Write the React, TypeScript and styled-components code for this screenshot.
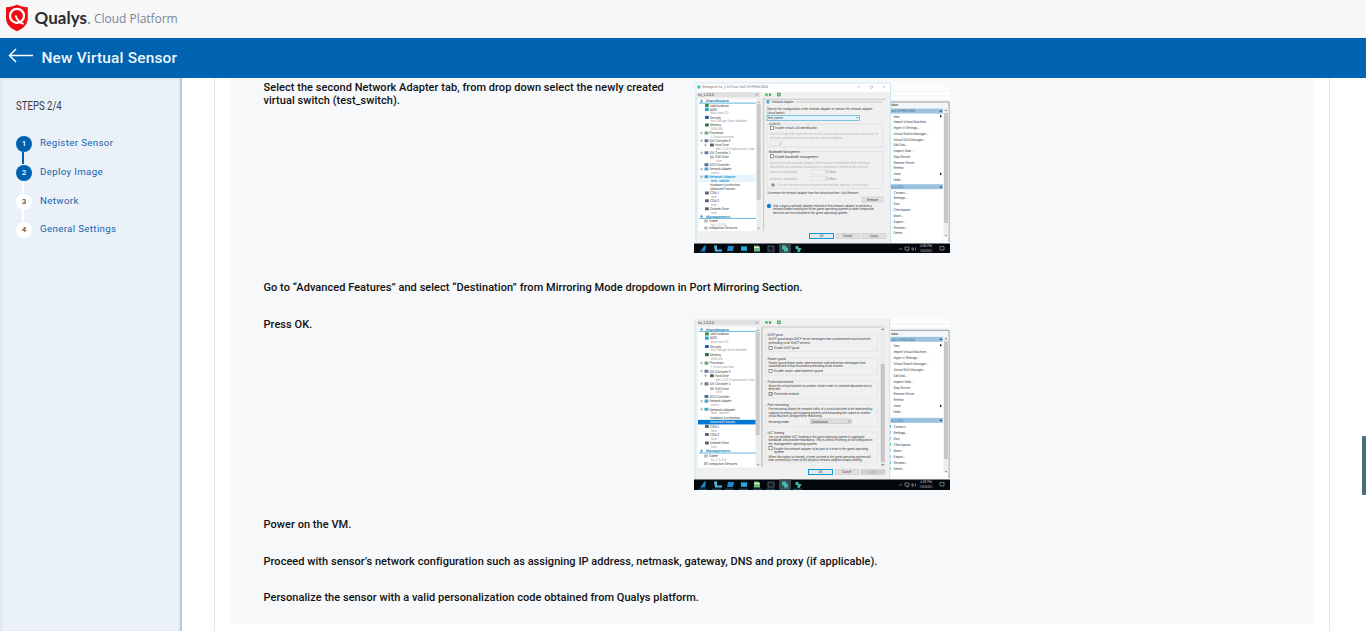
import React from "react";
import styled, { createGlobalStyle } from "styled-components";

const Global = createGlobalStyle`
  * { box-sizing: border-box; }
  body { margin: 0; background: #fff; overflow: hidden; font-family: Roboto, "Liberation Sans", sans-serif; }
`;

const Page = styled.div`
  display: flex;
  flex-direction: column;
  height: 631px;
  width: 1366px;
  overflow: hidden;
`;

const BrandBar = styled.header`
  display: flex;
  align-items: center;
  height: 38px;
  flex: none;
  padding: 0 0 2px 5px;
  background: #f7f7f7;
`;

const BrandName = styled.span`
  margin-left: 4.5px;
  width: 59.5px;
  font: 700 17px/24px Lato, sans-serif;
  letter-spacing: 0.05px;
  color: #2b2b2f;
  white-space: nowrap;
  small { font-size: 14px; color: #8a8a8a; }
`;

const Platform = styled.span`
  font: 400 12px/20px "Open Sans", sans-serif;
  letter-spacing: -0.03px;
  color: #76879b;
  padding-top: 2px;
`;

const TitleBar = styled.div`
  display: flex;
  align-items: center;
  height: 40px;
  flex: none;
  padding-left: 8px;
  background: #0063b1;
`;

const BackArrow = styled.svg`
  margin-top: -4px;
`;

const Title = styled.h1`
  margin: 0 0 0 8.5px;
  font-size: 15.4px;
  line-height: 20px;
  font-weight: 500;
  letter-spacing: 0.2px;
  color: #f1f6fb;
`;

const Body = styled.div`
  display: flex;
  flex: 1;
  min-height: 0;
`;

const Sidebar = styled.aside`
  width: 182px;
  flex: none;
  padding: 20px 0 0 16px;
  background: #eaf1f9;
  box-shadow: inset -3px 0 2px -1px #b9c1ca, inset 2px 1px 2px #dde5ec;
`;

const StepsTitle = styled.div`
  width: max-content;
  font-size: 12.8px;
  line-height: 16px;
  color: #333d47;
  transform: scaleX(0.75);
  transform-origin: left;
`;

const Steps = styled.ol`
  list-style: none;
  margin: 22px 0 0;
  padding: 0;
`;

const Step = styled.li`
  display: flex;
  height: 28.8px;
  font-size: 9.7px;
  line-height: 13px;
  letter-spacing: 0.36px;
  color: #1763ad;
`;

const StepTrack = styled.div`
  display: flex;
  flex-direction: column;
  align-items: center;
  width: 16px;
  margin-right: 8px;
`;

const StepDot = styled.span<{ $done?: boolean }>`
  flex: none;
  width: 16px;
  height: 16px;
  border-radius: 50%;
  background: ${(p) => (p.$done ? "#0061b0" : "#fff")};
  color: ${(p) => (p.$done ? "#fff" : "#4b4b4b")};
  font-size: 8px;
  font-weight: 500;
  line-height: 16px;
  letter-spacing: 0;
  text-align: center;
`;

const StepLine = styled.span<{ $done?: boolean }>`
  flex: 1;
  width: 2px;
  margin: 0 2px 1px 0;
  background: ${(p) => (p.$done ? "#0061b0" : "#fff")};
`;

const Main = styled.main`
  display: flex;
  flex: 1;
  padding-left: 32px;
`;

const Card = styled.section`
  width: 1116px;
  padding: 0 16px 7px;
  border: solid #e4e7ea;
  border-width: 0 1px;
`;

const Instructions = styled.div`
  height: 546px;
  padding: 3px 0 0 32.5px;
  background: #f6f8fa;
`;

const Row = styled.div<{ $h: number }>`
  display: flex;
  height: ${(p) => p.$h}px;
`;

const Copy = styled.p<{ $narrow?: boolean }>`
  margin: 0;
  width: ${(p) => (p.$narrow ? "430.5px" : "auto")};
  font-size: 11px;
  line-height: 13px;
  letter-spacing: 0.043px;
  font-weight: 500;
  color: #111;
  white-space: pre-line;
`;

const Shot = styled.svg<{ $top?: number }>`
  display: block;
  flex: none;
  margin-top: ${(p) => p.$top ?? 0}px;
  font-family: "Liberation Sans", sans-serif;
  text-rendering: geometricPrecision;
`;

const ScrollGutter = styled.div`
  display: flex;
  justify-content: flex-end;
  flex: 1;
  padding-top: 358px;
`;

const ScrollThumb = styled.div`
  width: 4px;
  height: 59px;
  border-radius: 1px;
  background: #4b6c7d;
`;

type LabelProps = { x: number; y: number; w?: number; c?: string; b?: boolean; children: string };

const Label = ({ x, y, w, c = "#333", b, children }: LabelProps) => (
  <text x={x} y={y + 1.35} fontSize="3.8" fill={c} fontWeight={b ? 700 : 400} textLength={w} lengthAdjust="spacingAndGlyphs">
    {children}
  </text>
);

type TreeRow = { y: number; x: number; w: number; t: string; sub?: boolean; icon?: string; head?: boolean; sel?: boolean; plus?: boolean };
const tree: TreeRow[] = [
  { y: 19, x: 12, w: 23, t: "Hardware", head: true },
  { y: 23.3, x: 16, w: 19, t: "Add Hardware", icon: "#34944f" },
  { y: 27.3, x: 16, w: 7, t: "BIOS", icon: "#22a7dc" },
  { y: 31, x: 16.5, w: 18, t: "Boot from CD", sub: true },
  { y: 35.3, x: 16, w: 11, t: "Security", icon: "#1767ae" },
  { y: 38.7, x: 16.5, w: 36, t: "Key Storage Drive disabled", sub: true },
  { y: 43, x: 16, w: 11, t: "Memory", icon: "#287447" },
  { y: 46.7, x: 16.5, w: 12, t: "16384 MB", sub: true },
  { y: 51, x: 15.5, w: 14, t: "Processor", icon: "#77a778", plus: true },
  { y: 54.3, x: 17, w: 23, t: "1 Virtual processor", sub: true },
  { y: 58.7, x: 15.5, w: 21, t: "IDE Controller 0", icon: "#607a9a", plus: true },
  { y: 63, x: 21, w: 14, t: "Hard Drive", icon: "#596269", plus: true },
  { y: 66.3, x: 21.5, w: 39, t: "q85-1.3.2-0-openstack1.vhdx", sub: true },
  { y: 70.7, x: 15.5, w: 21, t: "IDE Controller 1", icon: "#607a9a", plus: true },
  { y: 75, x: 21, w: 14, t: "DVD Drive", icon: "#b7bdc2" },
  { y: 78.3, x: 22, w: 6, t: "None", sub: true },
  { y: 82.7, x: 15.5, w: 20, t: "SCSI Controller", icon: "#477493" },
  { y: 87, x: 15.5, w: 22, t: "Network Adapter", icon: "#52a4ca", plus: true },
  { y: 90.7, x: 17, w: 8, t: "inner1", sub: true },
  { y: 94.7, x: 15.5, w: 26, t: "Network Adapter", icon: "#52a4ca", plus: true, sel: true },
  { y: 98.3, x: 17, w: 18, t: "test_switch", sub: true, sel: true },
  { y: 102.7, x: 16, w: 30, t: "Hardware Acceleration" },
  { y: 107, x: 16, w: 25, t: "Advanced Features" },
  { y: 111, x: 16, w: 9, t: "COM 1", icon: "#59666d" },
  { y: 114.7, x: 17, w: 6, t: "None", sub: true },
  { y: 118.7, x: 16, w: 9, t: "COM 2", icon: "#59666d" },
  { y: 122.3, x: 17, w: 6, t: "None", sub: true },
  { y: 126.7, x: 16, w: 19, t: "Diskette Drive", icon: "#5a6269" },
  { y: 130.3, x: 17, w: 6, t: "None", sub: true },
  { y: 134.3, x: 12, w: 24, t: "Management", head: true },
  { y: 139, x: 15, w: 9, t: "Name", icon: "#b9bdc0" },
  { y: 142.3, x: 17, w: 15, t: "hv_1.3.2-0", sub: true },
  { y: 146, x: 15, w: 28, t: "Integration Services", icon: "#b9bdc0" },
];

const SettingsTree = ({ advanced }: { advanced?: boolean }) => (
  <g>
    {tree.map((r, i) => {
      const y = advanced ? 11.3 + (r.y - 19) * 1.055 : r.y;
      const active = advanced ? r.t === "Advanced Features" : r.sel;
      const color = r.head ? "#1588bf" : active ? (advanced ? "#fff" : "#1397d4") : r.sub ? "#999" : "#333";
      return (
        <g key={i}>
          {advanced && active && <rect x="4" y={y - 2.3} width="57.5" height="4.6" fill="#0078d7" />}
          {!advanced && r.sel && <rect x="5" y={y - 2} width="56" height="3.7" fill="#e5f3fb" />}
          {r.head && <path d={`M5 ${y + 2.1}H62`} stroke="#38a6d8" strokeWidth=".8" />}
          {(r.head || r.plus) && <path d={`M${r.x > 20 ? 10 : 6} ${y}h3m-1.5-1.5v3`} stroke={r.head ? "#2999cf" : "#a7adb1"} strokeWidth=".8" />}
          {r.icon && <rect x={r.x - 5} y={y - 1.5} width="3.8" height="3.1" rx=".5" fill={r.icon} />}
          <Label x={r.x} y={y} w={r.w} c={color} b={r.head || (r.sel && !advanced)}>{r.t}</Label>
        </g>
      );
    })}
  </g>
);

const actions: [string, number][] = [
  ["New", 6], ["Import Virtual Machine...", 35], ["Hyper-V Settings...", 26], ["Virtual Switch Manager...", 35],
  ["Virtual SAN Manager...", 32], ["Edit Disk...", 14], ["Inspect Disk...", 20], ["Stop Service", 17],
  ["Remove Server", 21], ["Refresh", 10], ["View", 7], ["Help", 7],
];
const vmActions: [string, number][] = [
  ["Connect...", 14], ["Settings...", 14], ["Start", 6], ["Checkpoint", 17],
  ["Move...", 10], ["Export...", 12], ["Rename...", 14], ["Delete...", 11],
];

const ActionsPane = ({ title, start, pitch, head2, start2, pitch2 }: Record<"title" | "start" | "pitch" | "head2" | "start2" | "pitch2", number>) => (
  <g>
    <rect x="196" y="0" width="60" height="162" fill="#fafbfc" />
    <rect x="196" y={title - 12} width="60" height="8" fill="#fff" />
    <path d={`M196 ${title - 9}H256M196 ${title - 5}H256`} stroke="#e1e6ea" strokeWidth=".6" />
    <rect x="196.5" y={title - 3} width="58" height={161 - title} fill="#fff" />
    <path d={`M196.5 ${title - 3}H255V160`} fill="none" stroke="#8d969c" strokeWidth="1" />
    <rect x="197" y={title - 2} width="57" height="5" fill="#f4f5f6" />
    <Label x={197} y={title} w={7} c="#222" b>Actions</Label>
    {[title + 3.5, head2].map((y, i) => (
      <g key={i}>
        <rect x="196.5" y={y} width="52.5" height="5" fill="#9bc3df" />
        <Label x={197} y={y + 2.5} w={i ? 12 : 24} c="#3b5f78">{i ? "hv_1.3.2-0" : "NAC-HYPERV-2016"}</Label>
        <path d={`M245.5 ${y + 3.3}l1.3-1.8l1.3 1.8z`} fill="#28343d" />
      </g>
    ))}
    {actions.map(([t, w], i) => <Label key={t} x={199.5} y={start + i * pitch} w={w} c="#333">{t}</Label>)}
    {[0, 10].map((i) => <path key={i} d={`M246 ${start + i * pitch - 1.5}l2 1.5l-2 1.5z`} fill="#222" />)}
    {vmActions.map(([t, w], i) => (
      <g key={t}>
        <rect x="196" y={start2 + i * pitch2 - 1.2} width="1" height="2.4" fill={i % 3 ? "#83c2da" : "#29b5ac"} />
        <Label x={199.5} y={start2 + i * pitch2} w={w} c="#333">{t}</Label>
      </g>
    ))}
    <rect x="249.5" y={title + 3} width="5" height={152 - title} fill="#eceeef" />
    <rect x="250" y={title + 8} width="4" height={133 - title} fill="#c6c8ca" />
    <path d={`M250.7 ${title + 6}l1.3-1.6l1.3 1.6zM251 153h2l-1 1.5z`} fill="#777" />
  </g>
);

const Taskbar = ({ time }: { time: string }) => (
  <g transform="translate(0 161.5)">
    <rect width="256" height="10.5" fill="#03080d" />
    <path d="M7 7L10.500 2l1.500.2L11 8H6z" fill="#1d86c8" />
    <path d="M20 2h3v4h5v2h-7z" fill="#54b4df" />
    <path d="M34 2.500h6l-1 5h-6z" fill="#2586cf" />
    <rect x="47" y="2.8" width="6" height="4.5" fill="#25a8db" />
    <path d="M60 2h4l2 1v5h-6z" fill="#70bb78" />
    <path d="M60 4h5" stroke="#ecf3c9" />
    <rect x="74" y="2.6" width="6" height="5" fill="#111b21" stroke="#68747c" strokeWidth=".7" />
    <rect x="85" width="12" height="10" fill="#37474f" />
    <path d="M88 2h4v2h2v4h-4V6h-2zM101.500 2.500h3v2h3l-2 4h-2v-3h-2z" fill="#44b8ab" />
    <path d="M4 9.700h9M18 9.700h9M31 9.700h9M45 9.700h9M59 9.700h9M72 9.700h9M86 9.700h9M99 9.700h9" stroke="#4291bc" strokeWidth=".6" />
    <path d="M205 6.200l1.500-1.500L208 6.200M211 3.500h4v3h-4zM218 4v3l2-1.500zM221.500 4v3M246 3h4v3.500h-4zM213 7.500h1.500" fill="none" stroke="#aeb5b9" strokeWidth=".6" />
    <Label x={226} y={2.6} w={12} c="#dadde0">{time}</Label>
    <Label x={225.5} y={7.2} w={13} c="#b9bfc4">7/6/2021</Label>
  </g>
);

const DialogTop = ({ y }: { y: number }) => (
  <g>
    <rect x="4" y={y} width="62" height="4.8" fill="#e0e0e0" />
    <Label x={4} y={y + 2.4} w={16}>hv_1.3.2-0</Label>
    <path d={`M61.5 ${y + 2}l1.2 1.2l1.2-1.2`} fill="none" stroke="#666" strokeWidth=".6" />
    <path d={`M73.5 ${y + .8}v3.4l-3-1.7zM75 ${y + .8}v3.4l3-1.7z`} fill="#18b747" />
    <rect x="83.7" y={y + 1} width="2.4" height="2.6" fill="#d9f4df" stroke="#1b9941" strokeWidth=".9" />
    <path d={`M68 ${y + 7}H192`} stroke="#c4c4c4" strokeWidth=".9" />
  </g>
);

const Check = ({ x, y, on }: { x: number; y: number; on?: boolean }) => (
  <g fill="none" stroke="#555" strokeWidth=".6">
    <rect x={x} y={y - 1.6} width="3.2" height="3.2" fill="#fff" />
    {on && <path d={`M${x + .7} ${y}l.8.8l1.3-1.8`} />}
  </g>
);

const Buttons = ({ y, dx = 0, third }: { y: number; dx?: number; third: string }) => (
  <g transform={`translate(${dx} 0)`}>
    <rect x="115.5" y={y} width="24" height="5" fill="#e2e8eb" stroke="#1597d5" strokeWidth="1" />
    <rect x="142" y={y} width="24" height="5" fill="#dedede" stroke="#c6c6c6" strokeWidth=".5" />
    <rect x="168" y={y} width="24" height="5" fill={third === "#aaa" ? "#cfcfcf" : "#dedede"} stroke="#c6c6c6" strokeWidth=".5" />
    <Label x={125.5} y={y + 2.6} w={4}>OK</Label>
    <Label x={149} y={y + 2.6} w={9}>Cancel</Label>
    <Label x={176} y={y + 2.6} w={8} c={third}>Apply</Label>
  </g>
);

const AdapterShot = () => (
  <Shot $top={1} width="256" height="171" viewBox="0 0 256 171" role="img" aria-label="Network adapter settings">
    <rect width="256" height="171" fill="#f7f9fb" />
    <ActionsPane title={23} start={34.3} pitch={5.76} head2={102.2} start2={110.3} pitch2={5.83} />
    <rect x="1.5" y="1" width="195" height="160" fill="#f0f0f0" />
    <rect x="1.5" y="1" width="195" height="9" fill="#fff" />
    <path d="M2 161V1H196.500V161" fill="none" stroke="#b9dfe9" strokeWidth=".7" />
    <rect x="3.5" y="3.5" width="3" height="3" fill="#3ebec8" />
    <Label x={8} y={5} w={66} c="#666">Settings for hv_1.3.2-0 on NAC-HYPERV-2016</Label>
    <path d="M163.500 5h2.500M176 3.800h2.500v2.500H176zM188.500 3.800l2.500 2.500m0-2.500l-2.500 2.500" fill="none" stroke="#aaa" strokeWidth=".5" />
    <DialogTop y={10.2} />
    <rect x="4.5" y="17" width="58" height="132" fill="#fff" />
    <rect x="62.5" y="17" width="4.5" height="132" fill="#ededed" />
    <rect x="62.7" y="22" width="4" height="96" fill="#c9c9c9" />
    <path d="M63.600 21l1-1.300 1 1.300M63.600 145.500l1 1.300 1-1.300" stroke="#666" strokeWidth=".6" fill="none" />
    <SettingsTree />
    <path d="M69.700 17V149" stroke="#c4c4c4" />
    <rect x="72.5" y="18" width="3" height="3.5" fill="#62a9c6" />
    <Label x={78} y={20} w={22}>Network Adapter</Label>
    <path d="M102 20H189" stroke="#bdbdbd" strokeWidth=".8" />
    <Label x={73} y={26.3} w={106}>Specify the configuration of the network adapter or remove the network adapter.</Label>
    <Label x={73} y={31} w={18}>Virtual switch:</Label>
    <rect x="73" y="33.4" width="92.5" height="5" fill="#e3f1f9" stroke="#38a6d3" strokeWidth=".6" />
    <Label x={74} y={36} w={15}>test_switch</Label>
    <path d="M162 35l1.200 1.200 1.200-1.200" fill="none" stroke="#666" strokeWidth=".6" />
    <g fill="none" stroke="#dadada" strokeWidth=".6">
      <rect x="73" y="42" width="116" height="23" />
      <rect x="73" y="69.5" width="116" height="37" />
      <rect x="76" y="58.8" width="12" height="4.5" />
      <rect x="117" y="88" width="16" height="4.5" />
      <rect x="117" y="94.2" width="16" height="4.5" />
    </g>
    <Label x={75} y={41.3} w={11}>VLAN ID</Label>
    <Check x={76.5} y={45.8} />
    <Label x={81} y={45.8} w={42}>Enable virtual LAN identification</Label>
    <Label x={76} y={52} w={108} c="#b4b4b4">The VLAN identifier specifies the virtual LAN that this virtual machine will use for all</Label>
    <Label x={76} y={55.8} w={73} c="#b4b4b4">network communications through this network adapter.</Label>
    <Label x={85} y={61.2} w={2} c="#aaa">2</Label>
    <Label x={75} y={69.6} w={31}>Bandwidth Management</Label>
    <Check x={76.5} y={74.3} />
    <Label x={81} y={74.3} w={43}>Enable bandwidth management</Label>
    <Label x={76} y={81} w={100} c="#b4b4b4">Specify how this network adapter utilizes network bandwidth. Both Minimum</Label>
    <Label x={76} y={84.6} w={98} c="#b4b4b4">Bandwidth and Maximum Bandwidth are measured in Megabits per second.</Label>
    <Label x={76} y={90} w={28} c="#b4b4b4">Minimum bandwidth:</Label>
    <Label x={76} y={96.3} w={28} c="#b4b4b4">Maximum bandwidth:</Label>
    <Label x={131.5} y={90} w={11} c="#999">0  Mbps</Label>
    <Label x={131.5} y={96.3} w={11} c="#999">0  Mbps</Label>
    <circle cx="79" cy="103" r="1.8" fill="#8e8e8e" />
    <Label x={83} y={103} w={92} c="#b4b4b4">To leave the minimum or maximum unrestricted, specify 0 as the value.</Label>
    <Label x={73} y={111} w={92}>To remove the network adapter from this virtual machine, click Remove.</Label>
    <rect x="168" y="115" width="21" height="5" fill="#dfdfdf" stroke="#c6c6c6" strokeWidth=".5" />
    <Label x={173} y={117.6} w={11}>Remove</Label>
    <circle cx="75" cy="124" r="2.2" fill="#1682c9" />
    <Label x={79} y={123.6} w={99}>Use a legacy network adapter instead of this network adapter to perform a</Label>
    <Label x={79} y={127} w={101}>network-based installation of the guest operating system or when integration</Label>
    <Label x={79} y={130.5} w={75}>services are not installed in the guest operating system.</Label>
    <Buttons y={151.5} third="#555" />
    <Taskbar time="4:30 PM" />
  </Shot>
);

const sections: { top: number; h: number; title: string; lines: [string, number][]; check?: string; cy?: number; on?: boolean }[] = [
  { top: 16.5, h: 17, title: "DHCP guard", lines: [["DHCP guard drops DHCP server messages from unauthorized virtual machines", 102], ["pretending to be DHCP servers.", 42]], check: "Enable DHCP guard", cy: 30 },
  { top: 40, h: 17, title: "Router guard", lines: [["Router guard drops router advertisement and redirection messages from", 97], ["unauthorized virtual machines pretending to be routers.", 75]], check: "Enable router advertisement guard", cy: 53 },
  { top: 63, h: 17, title: "Protected network", lines: [["Move this virtual machine to another cluster node if a network disconnection is", 103], ["detected.", 12]], check: "Protected network", cy: 76, on: true },
  { top: 86.5, h: 22, title: "Port mirroring", lines: [["Port mirroring allows the network traffic of a virtual machine to be monitored by", 104], ["copying incoming and outgoing packets and forwarding the copies to another", 102], ["virtual machine configured for monitoring.", 54]] },
  { top: 114, h: 30, title: "NIC Teaming", lines: [["You can establish NIC Teaming in the guest operating system to aggregate", 96], ["bandwidth and provide redundancy. This is useful if teaming is not configured in", 104], ["the management operating system.", 49]], check: "Enable this network adapter to be part of a team in the guest operating", cy: 130.2 },
];

const MirroringShot = () => (
  <Shot width="256" height="172" viewBox="0 0 256 172" role="img" aria-label="Advanced features settings">
    <rect width="256" height="172" fill="#f8fafc" />
    <ActionsPane title={15.3} start={27.3} pitch={6.07} head2={99.8} start2={108.2} pitch2={6.06} />
    <rect x="1" y="1" width="195" height="161" fill="#f0f0f0" />
    <path d="M1 1V162M195.700 1V162" stroke="#b9dfe9" strokeWidth=".7" />
    <DialogTop y={2} />
    <rect x="4" y="9.5" width="58" height="140" fill="#fff" />
    <rect x="61.5" y="9.5" width="4.5" height="140" fill="#ededed" />
    <rect x="61.7" y="14" width="4" height="103" fill="#c9c9c9" />
    <path d="M63 13l1-1.300 1 1.300M63 146l1 1.300 1-1.300" stroke="#666" strokeWidth=".6" fill="none" />
    <SettingsTree advanced />
    <path d="M68 9.500V149" stroke="#aeb0b2" />
    {sections.map((s) => (
      <g key={s.title}>
        <rect x="71.5" y={s.top} width="112" height={s.h} fill="none" stroke="#dfdfdf" strokeWidth=".6" />
        <rect x="73" y={s.top - 1} width="22" height="3" fill="#f0f0f0" />
        <Label x={73.5} y={s.top + .2} w={s.title.length * 1.52}>{s.title}</Label>
        {s.lines.map(([t, w], i) => <Label key={t} x={74.5} y={s.top + 4.6 + i * 3.5} w={w}>{t}</Label>)}
        {s.check && <><Check x={75} y={s.cy!} on={s.on} /><Label x={80} y={s.cy!} w={Math.min(s.check.length * 1.48, 94)}>{s.check}</Label></>}
      </g>
    ))}
    <Label x={74.5} y={103.3} w={21}>Mirroring mode:</Label>
    <rect x="116.5" y="101" width="41" height="4.8" fill="#dedede" stroke="#bbb" strokeWidth=".5" />
    <Label x={118} y={103.4} w={16}>Destination</Label>
    <path d="M154 102.800l1.200 1.200 1.200-1.200" fill="none" stroke="#555" strokeWidth=".6" />
    <Label x={80} y={133.6} w={10}>system</Label>
    <Label x={74.5} y={138.3} w={102}>When this option is cleared, a team created in the guest operating system will</Label>
    <Label x={74.5} y={141.8} w={94}>lose connectivity if one of the physical network adapters stops working.</Label>
    <rect x="186.5" y="9" width="4.5" height="140" fill="#e9e9e9" />
    <rect x="186.8" y="46" width="4" height="98" fill="#c5c5c5" />
    <path d="M187.700 12l1-1.300 1 1.300M187.700 146l1 1.300 1-1.300" stroke="#333" strokeWidth=".7" fill="none" />
    <Buttons y={151.5} dx={-1} third="#aaa" />
    <Taskbar time="4:32 PM" />
  </Shot>
);

const stepNames = ["Register Sensor", "Deploy Image", "Network", "General Settings"];

export default function App() {
  return (
    <Page>
      <Global />
      <BrandBar>
        <svg width="25" height="28" viewBox="0 0 25 28">
          <path d="M12 .5C14.500 2 18 3 22.800 3.300V14c0 6.200-4 10.400-10.800 13.200C5.200 24.400 1 20.200 1 14V3.300C6 3 9.500 2 12 .5z" fill="#f10b12" />
          <circle cx="12" cy="11.8" r="7" fill="none" stroke="#fff" strokeWidth="2.2" />
          <path d="M10.500 11.500c1.500 4.500 4 7.200 8 8.500" fill="none" stroke="#fff" strokeWidth="1.900" />
        </svg>
        <BrandName>Qualys<small>.</small></BrandName>
        <Platform>Cloud Platform</Platform>
      </BrandBar>
      <TitleBar>
        <BackArrow width="25" height="16" viewBox="0 0 25 16" fill="none" stroke="#fff" strokeWidth="1.5">
          <path d="M1.500 7.500H25M8 1L1.500 7.500L8 14" />
        </BackArrow>
        <Title>New Virtual Sensor</Title>
      </TitleBar>
      <Body>
        <Sidebar>
          <StepsTitle>STEPS 2/4</StepsTitle>
          <Steps>
            {stepNames.map((name, i) => (
              <Step key={name}>
                <StepTrack>
                  <StepDot $done={i < 2}>{i + 1}</StepDot>
                  {i < 3 && <StepLine $done={i < 1} />}
                </StepTrack>
                {name}
              </Step>
            ))}
          </Steps>
        </Sidebar>
        <Main>
          <Card>
            <Instructions>
              <Row $h={200}>
                <Copy $narrow>{"Select the second Network Adapter tab, from drop down select the newly created\nvirtual switch (test_switch)."}</Copy>
                <AdapterShot />
              </Row>
              <Row $h={37}>
                <Copy>Go to “Advanced Features” and select “Destination” from Mirroring Mode dropdown in Port Mirroring Section.</Copy>
              </Row>
              <Row $h={200}>
                <Copy $narrow>Press OK.</Copy>
                <MirroringShot />
              </Row>
              <Row $h={37}>
                <Copy>Power on the VM.</Copy>
              </Row>
              <Row $h={36}>
                <Copy>Proceed with sensor’s network configuration such as assigning IP address, netmask, gateway, DNS and proxy (if applicable).</Copy>
              </Row>
              <Row $h={20}>
                <Copy>Personalize the sensor with a valid personalization code obtained from Qualys platform.</Copy>
              </Row>
            </Instructions>
          </Card>
          <ScrollGutter>
            <ScrollThumb />
          </ScrollGutter>
        </Main>
      </Body>
    </Page>
  );
}
